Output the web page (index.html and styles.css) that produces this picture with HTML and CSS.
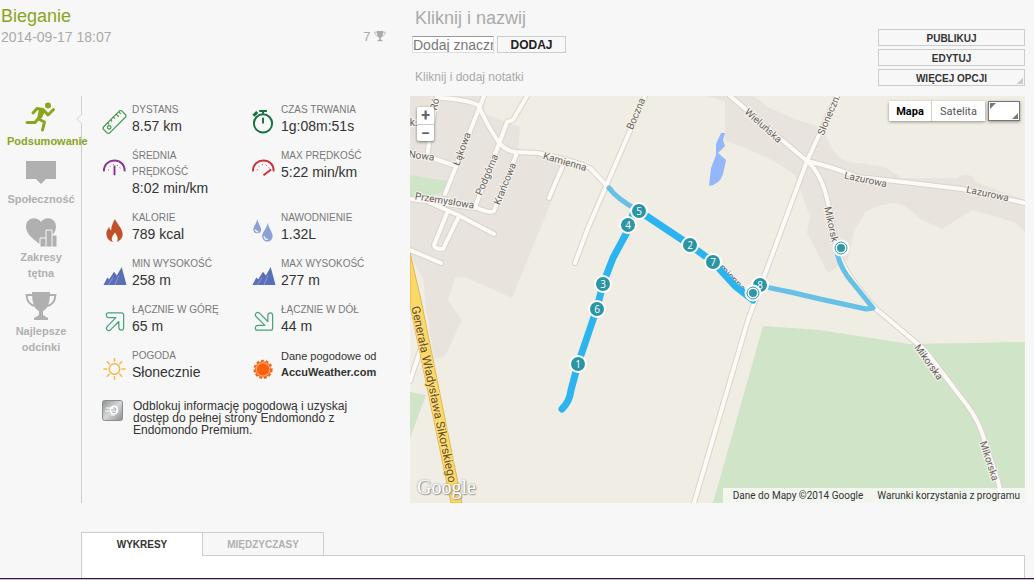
FILE: index.html
```
<!DOCTYPE html>
<html lang="pl">
<head>
    <meta charset="UTF-8">
    <meta name="viewport" content="width=device-width, initial-scale=1.0">
    <title>Bieganie</title>
    <link rel="stylesheet" href="styles.css">
</head>
<body>
    <header class="header">
        <div class="workout-title">
            <h1>Bieganie</h1>
            <div class="workout-date">
                <span>2014-09-17 18:07</span>
                <span class="records">7
                    <svg width="12" height="11" viewBox="0 0 32 30"><use href="#trophy"/></svg>
                </span>
            </div>
        </div>
        <div class="notes">
            <h2>Kliknij i nazwij</h2>
            <form class="tag-form">
                <input type="text" id="tag" aria-label="Dodaj znacznik" placeholder="Dodaj znacznik">
                <button type="button">DODAJ</button>
            </form>
            <p>Kliknij i dodaj notatki</p>
        </div>
        <div class="actions">
            <button type="button">PUBLIKUJ</button>
            <button type="button">EDYTUJ</button>
            <button type="button" class="more">WIĘCEJ OPCJI</button>
        </div>
    </header>

    <main class="workout">
        <nav class="sidebar">
            <a href="#" class="active">
                <svg width="32" height="30" viewBox="0 0 32 30">
                    <circle cx="23" cy="3.500" r="3" fill="currentColor"/>
                    <path d="M8 11 12 6.500 18 7.500 23 13 28.500 7.500M18 10 13.500 17 19.500 20 17.500 28M13 17 10 20.500H2" fill="none" stroke="currentColor" stroke-width="3" stroke-linecap="round" stroke-linejoin="round"/>
                    <path d="M14 7 20 7.500 17 16 12 17Z" fill="currentColor"/>
                </svg>
                <span>Podsumowanie</span>
            </a>
            <a href="#">
                <svg width="32" height="30" viewBox="0 0 32 30">
                    <path d="M1 1H31V19H21L16 24 11 19H1Z" fill="currentColor"/>
                </svg>
                <span>Społeczność</span>
            </a>
            <a href="#">
                <svg width="32" height="30" viewBox="0 0 32 30">
                    <path d="M16 4C12-2 1-1 1 9c0 7 8 13 15 18 7-5 15-11 15-18C31-1 20-2 16 4Z" fill="currentColor"/>
                    <path d="M15 29V20h6v-8h6v5h5v12Z" fill="currentColor" stroke="#f7f7f7" stroke-width="1"/>
                    <path d="M21 20v9M27 17v12" stroke="#f7f7f7"/>
                </svg>
                <span>Zakresy tętna</span>
            </a>
            <a href="#">
                <svg width="32" height="30" viewBox="0 0 32 30">
                    <g id="trophy">
                        <path d="M7 0H25C25 10 23 17 18 19V23L23 26V28H9V26L14 23V19C9 17 7 10 7 0Z" fill="currentColor"/>
                        <path d="M8 3H1.500C2 9 5 13 10 14M24 3H30.500C30 9 27 13 22 14" fill="none" stroke="currentColor" stroke-width="2"/>
                    </g>
                </svg>
                <span>Najlepsze odcinki</span>
            </a>
        </nav>

        <section class="summary">
            <div class="stats">
                <div class="stat">
                    <svg width="25" height="24" viewBox="0 0 25 25" fill="none" stroke="#4a9a50" stroke-width="1.300">
                        <rect x="-1" y="8" width="27" height="9" rx="2" transform="rotate(-45 12.500 12.500)"/>
                        <circle cx="7" cy="18" r="1.800"/>
                        <path d="M5 13l2 2M8 10l2 2M11 7l2 2M14 4l3 3M17 2l2 2"/>
                    </svg>
                    <div><h3>DYSTANS</h3><p>8.57 km</p></div>
                </div>
                <div class="stat">
                    <svg width="25" height="24" viewBox="0 0 25 25" fill="none" stroke="#15703c">
                        <circle cx="12" cy="14" r="9.500" stroke-width="2"/>
                        <path d="M12 4V1M8 1h8M12 8v6" stroke-width="2"/>
                        <path d="M2 6l4-4" stroke-width="3"/>
                    </svg>
                    <div><h3>CZAS TRWANIA</h3><p>1g:08m:51s</p></div>
                </div>
                <div class="stat">
                    <svg width="25" height="24" viewBox="0 0 25 25" fill="none" stroke="#8b3193">
                        <path d="M1.500 16C1 1 24 1 23 16" stroke-width="2"/>
                        <path d="M6 15C7 7 18 7 19 15" stroke-dasharray="1 3"/>
                        <path d="M12.500 10v10" stroke-width="2"/>
                    </svg>
                    <div><h3>ŚREDNIA<br>PRĘDKOŚĆ</h3><p>8:02 min/km</p></div>
                </div>
                <div class="stat">
                    <svg width="25" height="24" viewBox="0 0 25 25" fill="none" stroke="#c9303a">
                        <path d="M1.500 16C1 1 24 1 23 16" stroke-width="2"/>
                        <path d="M6 15C7 7 18 7 19 15" stroke-dasharray="1 3"/>
                        <path d="M12.500 20l8-6" stroke-width="2"/>
                    </svg>
                    <div><h3>MAX PRĘDKOŚĆ</h3><p>5:22 min/km</p></div>
                </div>
                <div class="stat">
                    <svg width="25" height="24" viewBox="0 0 25 25">
                        <path d="M13 1C15 6 21 11 21 17C21 21 18 24 15 25C17 21 15 18 13 15C11 18 8 21 11 25C6 24 4 20 4 16C4 13 6 11 7 9C7 11 8 12 9 13C9 8 11 5 13 1Z" fill="#c1502a"/>
                    </svg>
                    <div><h3>KALORIE</h3><p>789 kcal</p></div>
                </div>
                <div class="stat">
                    <svg width="25" height="24" viewBox="0 0 25 25">
                        <path d="M6 1C7 6 10 9 10 12A4 4 0 0 1 2 12C2 9 5 6 6 1ZM17 5C18 11 22 15 22 19A5.500 5.500 0 0 1 11 19C11 15 16 11 17 5Z" fill="#8da0d3"/>
                        <path d="M4 12q1 3 3 2M13 19q1 4 4 3" fill="none" stroke="#eef1fa" stroke-width="1.500"/>
                    </svg>
                    <div><h3>NAWODNIENIE</h3><p>1.32L</p></div>
                </div>
                <div class="stat">
                    <svg width="25" height="24" viewBox="0 0 25 25">
                        <g id="mountains">
                            <path d="M1 22L5 14 7 16 12 8 15 12 20 3 25 22Z" fill="#5a6fb7"/>
                            <path d="M6 22L11 14M13 22L17 12" stroke="#8f9dd0"/>
                        </g>
                    </svg>
                    <div><h3>MIN WYSOKOŚĆ</h3><p>258 m</p></div>
                </div>
                <div class="stat">
                    <svg width="25" height="24" viewBox="0 0 25 25"><use href="#mountains"/></svg>
                    <div><h3>MAX WYSOKOŚĆ</h3><p>277 m</p></div>
                </div>
                <div class="stat">
                    <svg width="25" height="24" viewBox="0 0 25 25" fill="none" stroke="#4ba37d" stroke-width="1.300" stroke-linejoin="round">
                        <path d="M6 3H20Q22 3 22 5V18Q22 21 20 21Q17 21 17 18V12L8 21Q6 22 5 21Q3 19 5 17L14 8H7Q4 8 4 5Q4 3 6 3Z"/>
                    </svg>
                    <div><h3>ŁĄCZNIE W GÓRĘ</h3><p>65 m</p></div>
                </div>
                <div class="stat">
                    <svg width="25" height="24" viewBox="0 0 25 25" fill="none" stroke="#4ba37d" stroke-width="1.300" stroke-linejoin="round">
                        <path d="M6 21H20Q22 21 22 19V6Q22 3 20 3Q17 3 17 6V12L8 3Q6 2 5 3Q3 5 5 7L14 16H7Q4 16 4 19Q4 21 6 21Z"/>
                    </svg>
                    <div><h3>ŁĄCZNIE W DÓŁ</h3><p>44 m</p></div>
                </div>
                <div class="stat">
                    <svg width="25" height="24" viewBox="0 0 25 25" fill="none" stroke="#f3b941" stroke-width="1.500">
                        <circle cx="12.500" cy="13.500" r="5.500"/>
                        <path d="M12.500 2v4M12.500 21v4M1 13.500h4M20 13.500h4M4.500 5.500l3 3M17.500 18.500l3 3M20.500 5.500l-3 3M7.500 18.500l-3 3"/>
                    </svg>
                    <div><h3>POGODA</h3><p>Słonecznie</p></div>
                </div>
                <div class="stat">
                    <svg width="25" height="24" viewBox="0 0 25 25">
                        <circle cx="12" cy="14" r="9" fill="none" stroke="#ed6a21" stroke-width="2" stroke-dasharray="3 2"/>
                        <circle cx="12" cy="14" r="8.500" fill="#ed6a21"/>
                        <circle cx="12" cy="14" r="7.500" fill="#f9ad72"/>
                        <circle cx="12" cy="14" r="6.500" fill="#fa620c"/>
                    </svg>
                    <a href="#" class="provider">Dane pogodowe od<br><b>AccuWeather.com</b></a>
                </div>
            </div>
            <div class="premium">
                <svg width="21" height="21" viewBox="0 0 21 21">
                    <defs>
                        <linearGradient id="silver" x1="0" y1="0" x2="1" y2="1">
                            <stop offset="0" stop-color="#8f9294"/>
                            <stop offset=".500" stop-color="#d5d7d8"/>
                            <stop offset="1" stop-color="#8a8d90"/>
                        </linearGradient>
                    </defs>
                    <rect x=".500" y=".500" width="20" height="20" rx="2" fill="url(#silver)" stroke="#8b8d8f"/>
                    <path d="M4 8h4M3 11h4M9 15h4" stroke="#fff"/>
                    <circle cx="12" cy="10" r="4.500" fill="#fff"/>
                    <path d="M9 10h5q0-3-3-2M10 12q2 1 4 0" fill="none" stroke="#a5a8aa"/>
                </svg>
                <p>Odblokuj informację pogodową i uzyskaj dostęp do pełnej strony Endomondo z Endomondo Premium.</p>
            </div>
        </section>

        <section class="map">
            <svg class="map-canvas" viewBox="0 0 615 407">
                <rect width="615" height="407" fill="#f0ede5"/>

                <!-- built-up areas -->
                <g fill="#e8e3dd">
                    <path d="M0 0H74L75 18 110 31 108 52 155 68 142 104 102 202 55 181 45 182 38 204 52 224 35 260 24 263 15 204 14 185 0 160Z"/>
                    <path d="M295 0H343L360 12 387 24 410 31 418 44Q422 55 430 62 438 67 448 67L475 71 492 82H548Q551 78 558 79 564 80 565 86L615 104V136L604 126 562 114 532 133 512 124Q495 108 485 107 462 110 455 117L444 135 438 164 418 177 410 162 397 137 400 121 385 79 366 66 340 54 315 44V5Z"/>
                </g>
                <!-- woods -->
                <g fill="#d0e4c8">
                    <path d="M0 79 37 85 34 97 0 102ZM0 296 16 299 0 342Z"/>
                    <path d="M353 230 410 234 500 248 615 246V407H303Z"/>
                </g>
                <path d="M311 37H315L313 44 315 50 308 57 316 64 313 78Q310 88 299 90L301 72 306 59 306 48Z" fill="#94b6fb"/>

                <!-- roads: casing first, then fill -->
                <defs>
                    <g id="roads" fill="none" stroke-linejoin="round" stroke-linecap="round">
                        <path d="M28 2Q55 3 68 9L78 29 89 47Q97 55 105 56L128 57Q165 65 180 72L200 93"/>
                        <path d="M74 0 35 98M27 0 17 60M0 57 22 62 43 69"/>
                        <path d="M117 0 103 24 97 26 90 45 65 111Q80 118 84 115L107 57"/>
                        <path d="M0 103 16 105 64 112M16 105 48 119 84 138"/>
                        <path d="M37 117 24 149Q24 153 33 153L48 122M0 154 31 167M0 285 10 255"/>
                        <path d="M154 67 139 102M235 0 200 81 178 132 165 167"/>
                        <path d="M320 0 397 65Q420 70 448 81L502 87 552 93 615 107"/>
                        <path d="M427 0 397 65 338 224 284 407"/>
                        <path d="M397 65Q412 78 418 107L427 151Q430 172 465 212L515 254 550 300Q565 318 571 334L588 385 593 407"/>
                    </g>
                </defs>
                <use href="#roads" stroke="#d9d4cc" stroke-width="6"/>
                <use href="#roads" stroke="#fbfaf6" stroke-width="4"/>
                <path d="M0 157 11 204 52 407H41L0 209Z" fill="#fbd965" stroke="#e0b656"/>

                <g class="labels">
                    <text transform="translate(28 9) rotate(-76)">Ró</text>
                    <text transform="translate(1 30)">sk.</text>
                    <text transform="translate(11 63) rotate(8)">Nowa</text>
                    <text transform="translate(55 54) rotate(-70)">Łąkowa</text>
                    <text transform="translate(80 80) rotate(-67)">Podgórna</text>
                    <text transform="translate(98 89) rotate(-68)">Krańcowa</text>
                    <text transform="translate(34 108) rotate(9)">Przemysłowa</text>
                    <text transform="translate(154 69) rotate(16)">Kamienna</text>
                    <text transform="translate(229 19) rotate(-67)">Boczna</text>
                    <text transform="translate(316 180) rotate(46)">Kamienna</text>
                    <text transform="translate(351 32) rotate(42)">Wieluńska</text>
                    <text transform="translate(422 20) rotate(-67)">Słoneczn.</text>
                    <text transform="translate(455 87) rotate(12)">Lazurowa</text>
                    <text transform="translate(577 101) rotate(12)">Lazurowa</text>
                    <text transform="translate(418 129) rotate(78)">Mikorsk</text>
                    <text transform="translate(516 268) rotate(54)">Mikorska</text>
                    <text transform="translate(576 366) rotate(72)">Mikorska</text>
                    <text class="main-road" transform="translate(20 299) rotate(78)">Generała Władysława Sikorskiego</text>
                </g>

                <!-- workout track -->
                <g fill="none" stroke-linecap="round" stroke-linejoin="round">
                    <path d="M199 92Q207 103 229 115M351 190 380 196 410 203 456 213 463 212 442 186Q430 172 427 156" stroke="#67c1e6" stroke-width="5"/>
                    <path d="M152 313Q160 305 161 294L168 268 187 212 193 188 203 162 217 136 223 118 229 115 280 149 303 166 325 190 343 204" stroke="#2bb4ef" stroke-width="7"/>
                </g>
                <g class="markers">
                    <circle cx="168" cy="268" r="8"/><text x="168" y="272">1</text>
                    <circle cx="187" cy="213" r="8"/><text x="187" y="217">6</text>
                    <circle cx="193" cy="188" r="8"/><text x="193" y="192">3</text>
                    <circle cx="218" cy="129" r="8"/><text x="218" y="133">4</text>
                    <circle cx="229" cy="115" r="8"/><text x="229" y="119">5</text>
                    <circle cx="280" cy="149" r="8"/><text x="280" y="153">2</text>
                    <circle cx="303" cy="166" r="8"/><text x="303" y="170">7</text>
                    <circle cx="350" cy="189" r="8"/><text x="350" y="193">8</text>
                </g>
                <g fill="#fff" stroke="#2f98a6">
                    <circle cx="343" cy="197" r="8" stroke="#fff"/>
                    <circle cx="343" cy="197" r="6"/>
                    <circle cx="343" cy="197" r="4" fill="#2f98a6" stroke="none"/>
                    <circle cx="431" cy="152" r="8" stroke="#fff"/>
                    <circle cx="431" cy="152" r="6"/>
                    <circle cx="431" cy="152" r="4" fill="#2f98a6" stroke="none"/>
                </g>
            </svg>

            <div class="zoom-control">
                <button type="button">+</button>
                <button type="button">−</button>
            </div>
            <div class="map-type">
                <div class="switch">
                    <button type="button" class="selected">Mapa</button>
                    <button type="button">Satelita</button>
                </div>
                <button type="button" class="fullscreen" aria-label="Pełny ekran">
                    <svg width="30" height="18" viewBox="0 0 30 18"><path d="M1 1h6L1 7ZM29 17h-6l6-6Z" fill="#777"/></svg>
                </button>
            </div>
            <span class="google">Google</span>
            <div class="copyright">
                <span>Dane do Mapy ©2014 Google</span>
                <a href="#">Warunki korzystania z programu</a>
            </div>
        </section>
    </main>

    <section class="charts">
        <div class="tabs">
            <button type="button" class="active">WYKRESY</button>
            <button type="button">MIĘDZYCZASY</button>
        </div>
        <div class="panel"></div>
    </section>
    <footer class="bottom-bar"></footer>
</body>
</html>
```
FILE: styles.css
```
* {
    box-sizing: border-box;
}
body {
    margin: 0;
    min-height: 100vh;
    display: flex;
    flex-direction: column;
    background-color: #f7f7f7;
    color: #333;
    font-family: "Liberation Sans", Arial, sans-serif;
}
h1, h2, h3, p {
    margin: 0;
    font-weight: normal;
}
a {
    color: inherit;
    text-decoration: none;
}
button {
    font-family: inherit;
    padding: 0;
    cursor: pointer;
}

/* header */
.header {
    display: grid;
    grid-template-columns: 386px 1fr 147px;
    height: 96px;
    padding-right: 9px;
}
.workout-title {
    padding: 6px 0 0 1px;
}
.workout-title h1 {
    color: #88a61c;
    font-size: 18px;
    line-height: 20px;
}
.workout-date {
    display: flex;
    justify-content: space-between;
    color: #aaa;
    font-size: 14px;
    line-height: 22px;
}
.records {
    font-size: 13px;
}
.records svg {
    vertical-align: -1px;
}
.notes {
    padding: 8px 0 0 26px;
    color: #aaa;
}
.notes h2 {
    padding-left: 3px;
    font-size: 18px;
    line-height: 20px;
}
.notes p {
    padding: 16px 0 0 3px;
    font-size: 12px;
    line-height: 16px;
}
.tag-form {
    display: flex;
    gap: 3px;
    padding-top: 8px;
}
.tag-form input {
    width: 82px;
    height: 17px;
    padding: 0;
    border: 1px solid #ddd;
    border-top-color: #999;
    background-color: #fff;
    font-family: inherit;
    font-size: 14px;
}
.tag-form input::placeholder {
    color: #777;
}
.tag-form button, .actions button {
    height: 17px;
    border: 1px solid #ccc;
    background-color: #f7f7f7;
    color: #333;
    font-weight: bold;
}
.tag-form button {
    width: 69px;
    color: #222;
    font-size: 12px;
    line-height: 16px;
}
.actions {
    display: flex;
    flex-direction: column;
    gap: 3px;
    padding-top: 29px;
}
.actions button {
    font-size: 10px;
    line-height: 17px;
}
.actions .more {
    background-image: linear-gradient(135deg, transparent 50%, #ccc 50%);
    background-repeat: no-repeat;
    background-position: right 1px bottom 1px;
    background-size: 6px 6px;
}

/* summary */
.workout {
    display: grid;
    grid-template-columns: 82px 328px 1fr;
    padding-right: 9px;
}
.sidebar {
    position: relative;
    display: flex;
    flex-direction: column;
    gap: 11px;
    padding: 6px 6px 0 7px;
    border-right: 1px solid #ccc;
}
.sidebar::after {
    content: "";
    position: absolute;
    top: 19px;
    right: -5px;
    width: 7px;
    height: 7px;
    border-left: 1px solid #ddd;
    border-bottom: 1px solid #ddd;
    background-color: #f7f7f7;
    transform: rotate(45deg);
}
.sidebar a {
    display: flex;
    flex-direction: column;
    align-items: center;
    gap: 1px;
    color: #b0b0b0;
    font-size: 11px;
    font-weight: bold;
    line-height: 16px;
    text-align: center;
}
.sidebar .active {
    align-items: flex-start;
    color: #88a61c;
}
.sidebar .active svg {
    margin-left: 18px;
}
.summary {
    padding: 6px 10px 0 20px;
}
.stats {
    display: grid;
    grid-template-columns: 149px 149px;
    row-gap: 14px;
}
.stat {
    display: flex;
    gap: 5px;
}
.stat svg {
    flex: none;
    margin-top: 8px;
}
.stat h3 {
    color: #777;
    font-size: 10px;
    line-height: 16px;
}
.stat p {
    font-size: 14px;
    line-height: 16px;
}
.provider {
    font-size: 11px;
    line-height: 16px;
    white-space: nowrap;
}
.premium {
    display: flex;
    gap: 10px;
    padding-top: 20px;
    font-size: 12px;
    line-height: 12px;
}
.premium svg {
    flex: none;
}
.premium p {
    max-width: 230px;
}

/* map */
.map {
    position: relative;
    font-family: Roboto, sans-serif;
}
.map-canvas {
    display: block;
    width: 100%;
}
.labels text {
    fill: #665f58;
    font-size: 10px;
    text-anchor: middle;
    stroke: #f7f4ef;
    stroke-width: 2px;
    paint-order: stroke;
}
.labels .main-road {
    fill: #6b4a1c;
    font-size: 12px;
    stroke: #fbe07f;
}
.markers circle {
    fill: #2c95a4;
    stroke: #fff;
    stroke-width: 2px;
}
.markers text {
    fill: #fff;
    font-family: "Open Sans", sans-serif;
    font-size: 10px;
    text-anchor: middle;
}
.zoom-control {
    position: absolute;
    top: 11px;
    left: 7px;
    display: flex;
    flex-direction: column;
    width: 17px;
    border-radius: 2px;
    background-color: #fff;
    box-shadow: 0 1px 3px rgba(0, 0, 0, 0.5);
}
.zoom-control button {
    height: 17px;
    border: 0;
    background: none;
    color: #666;
    font-size: 16px;
    font-weight: bold;
    line-height: 17px;
}
.zoom-control button + button {
    border-top: 1px solid #ccc;
}
.map-type {
    position: absolute;
    top: 5px;
    right: 5px;
    display: flex;
    gap: 3px;
}
.switch {
    display: flex;
    box-shadow: 0 1px 3px rgba(0, 0, 0, 0.4);
}
.switch button {
    width: 53px;
    height: 20px;
    border: 0;
    background-color: #fff;
    color: #555;
    font-size: 11px;
    line-height: 22px;
}
.switch .selected {
    width: 43px;
    border-right: 1px solid #ccc;
    color: #000;
    font-weight: bold;
}
.fullscreen {
    height: 20px;
    border: 1px solid #777;
    background-color: #fff;
    box-shadow: 0 1px 3px rgba(0, 0, 0, 0.4);
}
.fullscreen svg {
    display: block;
}
.google {
    position: absolute;
    bottom: 4px;
    left: 7px;
    color: #fff;
    font-family: "Liberation Serif", serif;
    font-size: 20px;
    line-height: 24px;
    text-shadow: 0 0 2px #888, 1px 1px 1px #999;
}
.copyright {
    position: absolute;
    right: 0;
    bottom: 0;
    display: flex;
    gap: 14px;
    padding: 0 5px 0 10px;
    background-color: rgba(255, 255, 255, 0.7);
    color: #333;
    font-size: 10px;
    line-height: 15px;
}

/* charts */
.charts {
    flex: 1;
    display: flex;
    flex-direction: column;
    padding: 29px 9px 0 81px;
}
.tabs {
    display: flex;
}
.tabs button {
    width: 121px;
    height: 23px;
    border: 1px solid #ccc;
    border-width: 1px 1px 0 0;
    background-color: #f7f7f7;
    color: #b0b0b0;
    font-size: 10px;
    font-weight: bold;
}
.tabs .active {
    position: relative;
    width: 122px;
    height: 24px;
    margin-bottom: -1px;
    border-left-width: 1px;
    background-color: #fff;
    color: #333;
}
.panel {
    flex: 1;
    min-height: 22px;
    border: 1px solid #ccc;
    border-bottom: 0;
    background-color: #fff;
}
.bottom-bar {
    height: 2px;
    border-top: 1px solid #2d1a40;
    background-color: #c9b8d6;
}
```
